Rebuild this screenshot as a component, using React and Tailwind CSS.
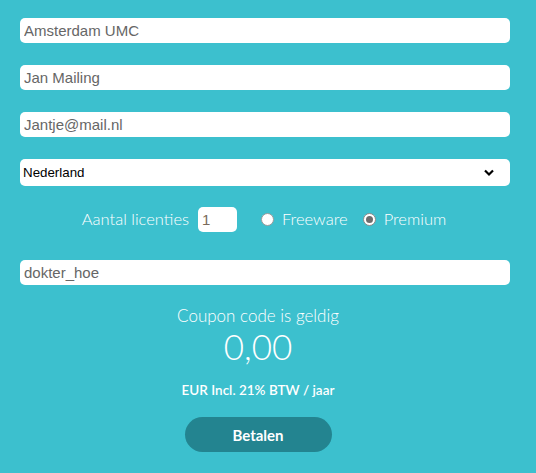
import { useState } from 'react';

function Radio({ checked, label }) {
  return (
    <label className="flex items-center gap-[8px]">
      <span
        className={
          'flex h-[13px] w-[13px] items-center justify-center rounded-full border bg-white ' +
          (checked ? 'border-[#8a8a8a]' : 'border-[#9a9a9a]')
        }
      >
        {checked && <span className="h-[7px] w-[7px] rounded-full bg-[#6d6d6d]" />}
      </span>
      <span>{label}</span>
    </label>
  );
}

export default function App() {
  const [licenses, setLicenses] = useState('1');

  const fields = ['Amsterdam UMC', 'Jan Mailing', 'Jantje@mail.nl'];
  const inputCls =
    "h-[25px] w-full rounded-[5px] bg-white px-[4px] font-['Liberation_Sans',Arial,sans-serif] text-[15px] text-[#666] outline-none";

  return (
    <div className="min-h-screen w-full bg-[#3cc0ce] font-['Lato',sans-serif] text-white">
      <div className="w-[516px] pt-[18px] pb-[20px]">
        <div className="ml-[20px] flex w-[490px] flex-col gap-[22px]">
          {fields.map((value) => (
            <input key={value} defaultValue={value} className={inputCls} />
          ))}
          <div className="relative h-[27px] w-full rounded-[5px] bg-white">
            <select
              defaultValue="NL"
              className="h-full w-full appearance-none rounded-[5px] bg-transparent pl-[3px] font-['Liberation_Sans',Arial,sans-serif] text-[13.33px] text-black outline-none"
            >
              <option value="NL">Nederland</option>
            </select>
            <svg
              className="pointer-events-none absolute top-[10px] right-[16px]"
              width="10"
              height="8"
              viewBox="0 0 10 8"
            >
              <path d="M1 1.5 L5 5.5 L9 1.5" fill="none" stroke="#000" strokeWidth="2.2" />
            </svg>
          </div>
        </div>

        <div className="mt-[21px] flex h-[25px] items-center justify-center pl-[12px] text-[16.5px] font-light">
          <span>Aantal licenties</span>
          <input
            value={licenses}
            onChange={(e) => setLicenses(e.target.value)}
            className="ml-[9px] h-[25px] w-[39px] rounded-[5px] bg-white px-[4px] font-['Liberation_Sans',Arial,sans-serif] text-[15px] text-[#7a6a5a] outline-none"
          />
          <div className="ml-[24px] flex items-center gap-[15px]">
            <Radio label="Freeware" />
            <Radio checked label="Premium" />
          </div>
        </div>

        <div className="mt-[28px] ml-[20px] w-[490px]">
          <input defaultValue="dokter_hoe" className={inputCls} />
        </div>

        <div className="mt-[20px] flex flex-col items-center">
          <div className="text-[17px] leading-[22px] font-light">Coupon code is geldig</div>
          <div className="text-[35px] leading-[38px] font-light">0,00</div>
          <div className="mt-[15px] text-[13.5px] font-semibold">EUR Incl. 21% BTW / jaar</div>
          <button className="mt-[17px] h-[35px] w-[147px] rounded-full bg-[#238490] text-[15px] font-bold text-white">
            Betalen
          </button>
        </div>
      </div>
    </div>
  );
}
